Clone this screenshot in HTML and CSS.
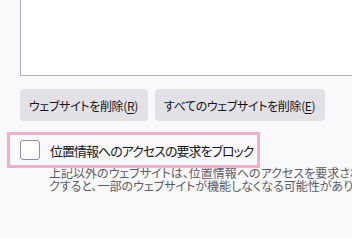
FILE: index.html
```html
<!DOCTYPE html>
<html lang="ja">
<head>
<meta charset="UTF-8">
<title>位置情報の許可設定</title>
<link rel="stylesheet" href="styles.css">
</head>
<body>
<div class="perm-panel">
    <div class="perm-list"></div>
    <div class="perm-actions">
        <button class="perm-btn">ウェブサイトを削除(<u>R</u>)</button>
        <button class="perm-btn">すべてのウェブサイトを削除(<u>E</u>)</button>
    </div>
    <label class="perm-block">
        <span class="perm-check"></span>
        <span class="perm-block-label">位置情報へのアクセスの要求をブロック</span>
    </label>
    <p class="perm-desc">上記以外のウェブサイトは、位置情報へのアクセスを要求されなくなります。位置情報へのアクセスをブロッ<br>クすると、一部のウェブサイトが機能しなくなる可能性があります。</p>
</div>
</body>
</html>
```

FILE: styles.css
```css
body {
    margin: 0;
    background: #f9f9fb;
    color: #15141a;
    font-family: "Noto Sans CJK JP", "Noto Sans", sans-serif;
    font-feature-settings: "palt";
    overflow: hidden;
}
.perm-panel {
    padding-left: 20px;
    width: 600px;
}
.perm-list {
    height: 75px;
    width: 500px;
    background: #fff;
    border: 1px solid #b1b1b7;
    border-top: none;
}
.perm-actions {
    display: flex;
    gap: 7px;
    margin-top: 13px;
}
.perm-btn {
    height: 32px;
    padding: 0 10px 0 9px;
    border: none;
    border-radius: 4px;
    background: #e2e2e6;
    color: #15141a;
    font-family: inherit;
    font-feature-settings: "palt";
    font-size: 12px;
    letter-spacing: -0.35px;
}
.perm-btn u {
    text-underline-offset: 2px;
}
.perm-block {
    display: flex;
    align-items: center;
    gap: 10px;
    width: fit-content;
    height: 30px;
    margin: 14px 0 0 -10px;
    padding: 0 4px 0 10px;
    outline: 3px solid #f2afcd;
    font-size: 13px;
    letter-spacing: -1px;
}
.perm-check {
    width: 18px;
    height: 18px;
    border: 1px solid #8f8f9d;
    border-radius: 3px;
    background: #fff;
}
.perm-desc {
    margin: 1px 0 0 29px;
    white-space: nowrap;
    font-size: 12px;
    line-height: 13px;
    color: #5b5b66;
}
```
